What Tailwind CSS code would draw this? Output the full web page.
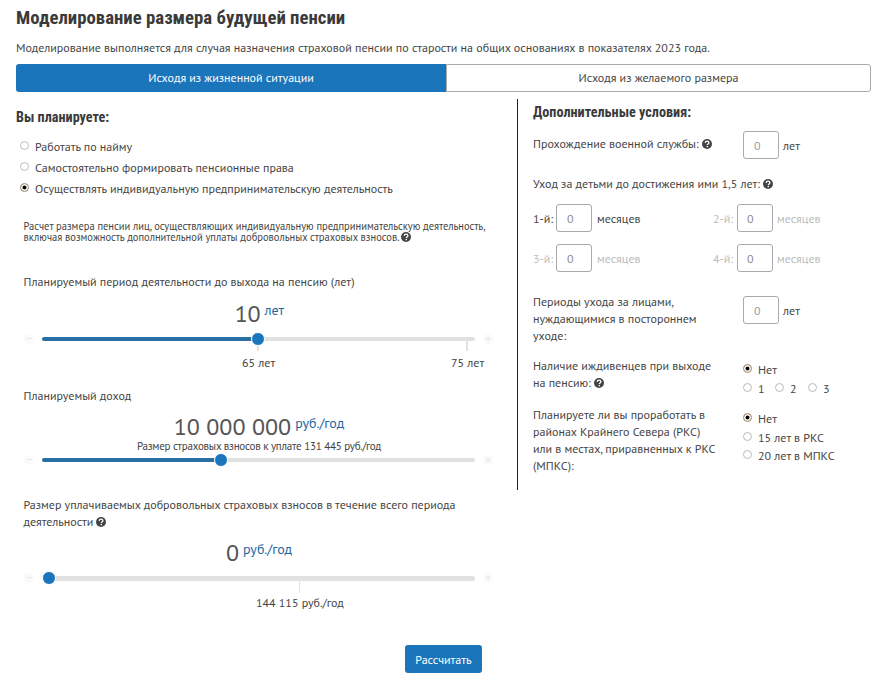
<!DOCTYPE html>
<html lang="ru">
<head>
  <meta charset="UTF-8" />
  <title>Моделирование размера будущей пенсии</title>
  <script src="https://cdn.jsdelivr.net/npm/@tailwindcss/browser@4"></script>
</head>
<body class="bg-white text-[#444] font-['PT_Sans','Noto_Sans',sans-serif] text-[12px] leading-[17px] whitespace-nowrap w-[885px] h-[691px] overflow-hidden pl-4">
  <svg class="hidden">
    <symbol id="help" viewBox="0 0 10 10">
      <circle cx="5" cy="5" r="5" fill="#444" />
      <path d="M3.2 3.9C3.3 2.7 4.1 2.2 5 2.2c1.1 0 1.9.6 1.9 1.5 0 1.2-1.6 1.2-1.6 2.2" fill="none" stroke="#fff" stroke-width="1.3" />
      <rect x="4.6" y="6.9" width="1.4" height="1.3" fill="#fff" />
    </symbol>
  </svg>

  <h1 class="h-9 leading-9 text-[18.75px] font-bold text-[#3a3a3a] font-['Roboto_Condensed','Roboto',sans-serif]">Моделирование размера будущей пенсии</h1>
  <p class="h-7 leading-[24px] tracking-[0.01px]">Моделирование выполняется для случая назначения страховой пенсии по старости на общих основаниях в показателях 2023 года.</p>

  <!-- Tabs -->
  <div class="flex h-7 w-[855px] text-center leading-[27px]">
    <div class="w-[430px] bg-[#1b75bb] text-white rounded-l-[3px]">Исходя из жизненной ситуации</div>
    <div class="flex-1 border border-[#aaa] rounded-r-[3px] leading-[25px]">Исходя из желаемого размера</div>
  </div>

  <div class="flex items-start">
    <!-- Left column -->
    <div class="w-[501px] shrink-0 pt-4">
      <h2 class="h-7 leading-[19px] text-[14.2px] font-bold text-[#3a3a3a] font-['Roboto_Condensed','Roboto',sans-serif]">Вы планируете:</h2>
      <div class="flex items-center h-[21px] gap-[6px] pl-1"><i class="size-[9px] rounded-full border border-[#bbb] -mt-[3px]"></i><span>Работать по найму</span></div>
      <div class="flex items-center h-[21px] gap-[6px] pl-1"><i class="size-[9px] rounded-full border border-[#bbb] -mt-[3px]"></i><span>Самостоятельно формировать пенсионные права</span></div>
      <div class="flex items-center h-[21px] gap-[6px] pl-1"><i class="size-[9px] rounded-full border border-[#c8b48c] bg-black shadow-[inset_0_0_0_1.5px_#fff] -mt-[3px]"></i><span>Осуществлять индивидуальную предпринимательскую деятельность</span></div>

      <div class="pl-[7.5px]">
        <p class="pt-[22px] h-[74px] text-[10.5px] leading-[11px]">Расчет размера пенсии лиц, осуществляющих индивидуальную предпринимательскую деятельность,<br>включая возможность дополнительной уплаты добровольных страховых взносов. <svg class="inline size-[10px] -mt-[2px]"><use href="#help" /></svg></p>
        <p class="h-[28px]">Планируемый период деятельности до выхода на пенсию (лет)</p>
      </div>
      <div class="flex justify-center h-[34px] w-[487px] gap-[4px]"><span class="text-[24px] leading-[26px] tracking-[-0.3px] text-[#555]">10</span><span class="text-[14px] leading-[18px] text-[#1f679f]">лет</span></div>
      <div class="flex items-center h-2 pl-2 gap-[8px] text-[#ddd] text-[10px]">
        <span class="size-[10px] rounded-full bg-[#fafafa] leading-[10px] text-center">−</span>
        <div class="w-[433px] h-1 rounded-full bg-[#e1e1e1] relative">
          <div class="w-[216px] h-1 rounded-full bg-[#286fa3]"></div>
          <div class="absolute left-[215px] top-[6px] w-[2px] h-2 bg-[#e1e1e1]"></div>
          <div class="absolute left-[424px] top-0 w-[2px] h-[14px] bg-[#e1e1e1]"></div>
          <div class="absolute left-[209px] -top-[5px] size-[14px] rounded-full bg-[#1b75bb] border-[1.5px] border-white"></div>
        </div>
        <span class="size-[10px] rounded-full bg-[#fafafa] leading-[10px] text-center">+</span>
      </div>
      <div class="flex h-[44px] pt-[11px]"><span class="ml-[226px] w-[34px]">65 лет</span><span class="ml-[175px]">75 лет</span></div>

      <p class="pl-[7.5px] h-[26px]">Планируемый доход</p>
      <div class="flex justify-center h-[25px] w-[486px] gap-[4px]"><span class="text-[24px] leading-[27px] text-[#555]">10 000 000</span><span class="text-[14px] leading-[20px] text-[#1f679f]">руб./год</span></div>
      <p class="h-[18px] w-[486px] text-center text-[11px] leading-[17px] tracking-[-0.22px]">Размер страховых взносов к уплате 131 445 руб./год</p>
      <div class="flex items-center h-2 pl-2 gap-[8px] text-[#ddd] text-[10px]">
        <span class="size-[10px] rounded-full bg-[#fafafa] leading-[10px] text-center">−</span>
        <div class="w-[433px] h-1 rounded-full bg-[#e1e1e1] relative">
          <div class="w-[178px] h-1 rounded-full bg-[#286fa3]"></div>
          <div class="absolute left-[172px] -top-[5px] size-[14px] rounded-full bg-[#1b75bb] border-[1.5px] border-white"></div>
        </div>
        <span class="size-[10px] rounded-full bg-[#fafafa] leading-[10px] text-center">+</span>
      </div>

      <p class="pl-[7.5px] pt-[32px] h-[75px]">Размер уплачиваемых добровольных страховых взносов в течение всего периода<br>деятельности <svg class="inline size-[10px] -mt-[3px]"><use href="#help" /></svg></p>
      <div class="flex justify-center h-[35px] w-[486px] gap-[4px]"><span class="text-[24px] leading-[28px] text-[#555]">0</span><span class="text-[14px] leading-[20px] text-[#1f679f]">руб./год</span></div>
      <div class="flex items-center h-2 pl-2 gap-[8px] text-[#ddd] text-[10px]">
        <span class="size-[10px] rounded-full bg-[#fafafa] leading-[10px] text-center">−</span>
        <div class="w-[433px] h-[5px] rounded-full bg-[#e1e1e1] relative">
          <div class="absolute left-[257px] top-0 w-px h-[17px] bg-[#e1e1e1]"></div>
          <div class="absolute left-0 -top-[5px] size-[14px] rounded-full bg-[#1b75bb] border-[1.5px] border-white"></div>
        </div>
        <span class="size-[10px] rounded-full bg-[#fafafa] leading-[10px] text-center">+</span>
      </div>
      <p class="pl-[240px] pt-[12px]">144 115 руб./год</p>
    </div>

    <!-- Right column -->
    <div class="mt-[7px] h-[391px] border-l border-[#222] pl-[15px] pt-1">
      <h2 class="h-5 leading-[19px] text-[14.2px] font-bold text-[#3a3a3a] font-['Roboto_Condensed','Roboto',sans-serif]">Дополнительные условия:</h2>
      <div class="flex pt-2 h-[52px]">
        <p class="w-[210px] pt-1">Прохождение военной службы: <svg class="inline size-[10px] -mt-[2px]"><use href="#help" /></svg></p>
        <div class="w-9 h-7 border border-[#aaa] rounded-[3px] pl-[10px] leading-[27px] text-[#999] mr-1">0</div><span class="pt-[6px]">лет</span>
      </div>
      <p class="h-[29px]">Уход за детьми до достижения ими 1,5 лет: <svg class="inline size-[10px] -mt-[2px]"><use href="#help" /></svg></p>
      <div class="grid grid-cols-[180px_180px] gap-y-[11px]">
        <div class="flex leading-[29px]"><span class="w-[23px]">1-й:</span><div class="w-9 h-7 border border-[#aaa] rounded-[3px] pl-[10px] leading-7 text-[#888] mr-[5px]">0</div><span>месяцев</span></div>
        <div class="flex leading-[29px] text-[#bbb]"><span class="w-6">2-й:</span><div class="w-9 h-7 border border-[#aaa] rounded-[3px] pl-[9px] leading-7 text-[#888] mr-[4px]">0</div><span>месяцев</span></div>
        <div class="flex leading-[29px] text-[#bbb]"><span class="w-[23px]">3-й:</span><div class="w-9 h-7 border border-[#aaa] rounded-[3px] pl-[10px] leading-7 text-[#888] mr-[5px]">0</div><span>месяцев</span></div>
        <div class="flex leading-[29px] text-[#bbb]"><span class="w-6">4-й:</span><div class="w-9 h-7 border border-[#aaa] rounded-[3px] pl-[9px] leading-7 text-[#888] mr-[4px]">0</div><span>месяцев</span></div>
      </div>
      <div class="flex pt-[20px] h-[84px]">
        <p class="w-[210px]">Периоды ухода за лицами,<br>нуждающимися в постороннем<br>уходе:</p>
        <div class="w-9 h-7 border border-[#aaa] rounded-[3px] pl-[10px] leading-[27px] text-[#999] mr-1 mt-[3px]">0</div><span class="pt-[9px]">лет</span>
      </div>
      <div class="flex h-[49px]">
        <p class="w-[210px]">Наличие иждивенцев при выходе<br>на пенсию: <svg class="inline size-[10px] -mt-[2px]"><use href="#help" /></svg></p>
        <div class="pt-[3px]">
          <div class="flex items-center h-[19px] gap-[6px]"><i class="size-[9px] rounded-full border border-[#c8b48c] bg-black shadow-[inset_0_0_0_1.5px_#fff] -mt-[2px]"></i><span>Нет</span></div>
          <div class="flex items-center h-[18px]"><i class="size-[9px] rounded-full border border-[#bbb] -mt-[1px] mr-[6px]"></i><span class="w-[17px]">1</span><i class="size-[9px] rounded-full border border-[#bbb] -mt-[1px] mr-[6px]"></i><span class="w-[18px]">2</span><i class="size-[9px] rounded-full border border-[#bbb] -mt-[1px] mr-[6px]"></i><span>3</span></div>
        </div>
      </div>
      <div class="flex">
        <p class="w-[210px]">Планируете ли вы проработать в<br>районах Крайнего Севера (РКС)<br>или в местах, приравненных к РКС<br>(МПКС):</p>
        <div class="pt-[3px]">
          <div class="flex items-center h-[19px] gap-[6px]"><i class="size-[9px] rounded-full border border-[#c8b48c] bg-black shadow-[inset_0_0_0_1.5px_#fff] -mt-[2px]"></i><span>Нет</span></div>
          <div class="flex items-center h-[18px] gap-[6px]"><i class="size-[9px] rounded-full border border-[#bbb] -mt-[1px]"></i><span>15 лет в РКС</span></div>
          <div class="flex items-center h-[18px] gap-[6px]"><i class="size-[9px] rounded-full border border-[#bbb] -mt-[1px]"></i><span>20 лет в МПКС</span></div>
        </div>
      </div>
    </div>
  </div>

  <button class="block ml-[389px] mt-[34px] w-[77px] h-7 rounded-[3px] bg-[#1b75bb] text-white">Рассчитать</button>
</body>
</html>
